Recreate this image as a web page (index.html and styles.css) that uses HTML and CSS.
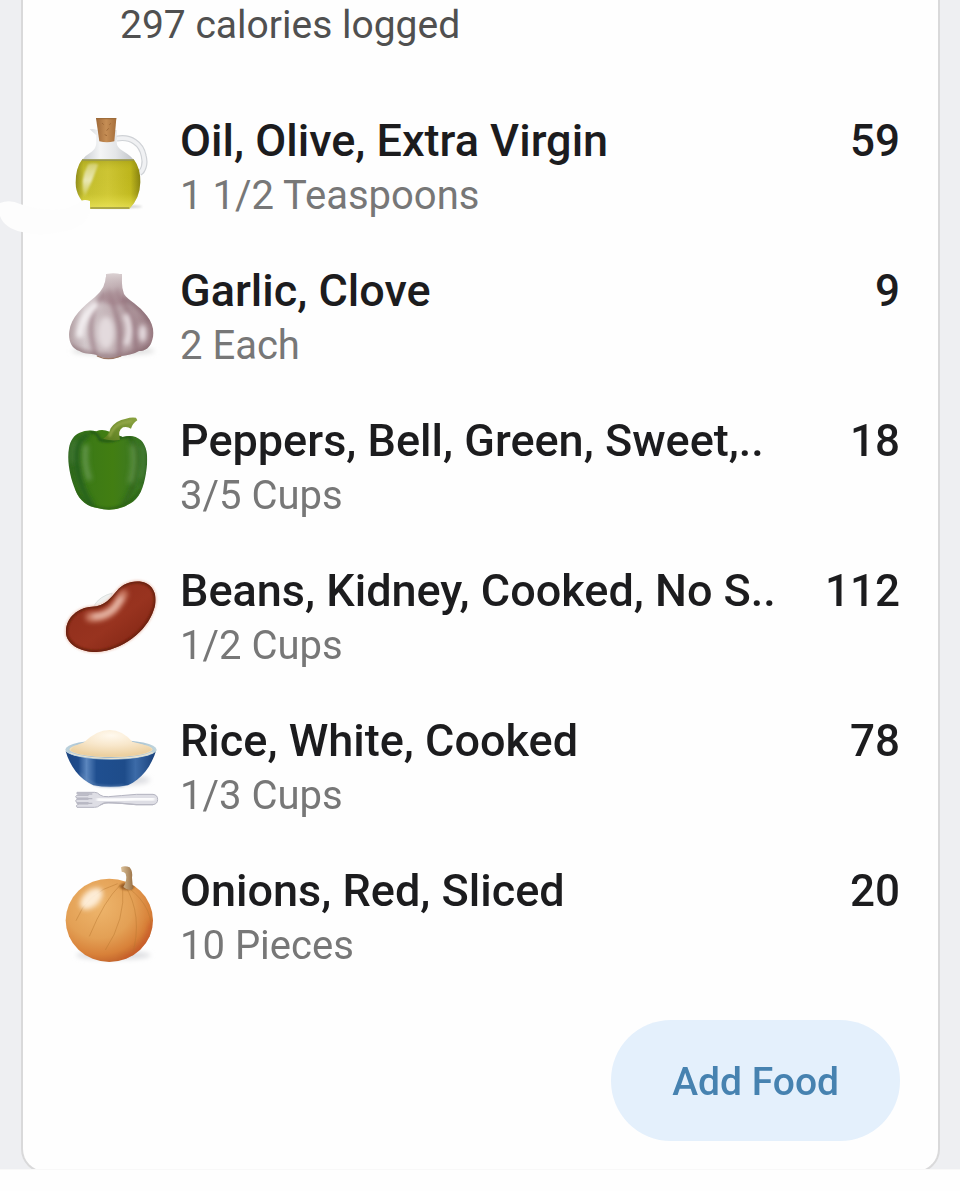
FILE: index.html
```html
<!DOCTYPE html>
<html lang="en">
<head>
<meta charset="utf-8">
<meta name="viewport" content="width=device-width, initial-scale=1">
<title>Food log</title>
<link rel="stylesheet" href="styles.css">
</head>
<body>
<main class="screen">
  <section class="card">
    <p class="summary">297 calories logged</p>
    <ul class="foods">
      <li class="food">
        <svg class="icon" viewBox="168 30 330 330" aria-hidden="true">
          <defs>
            <linearGradient id="oil" x1="0" x2="1"><stop offset="0" stop-color="#8f8b1c"/><stop offset=".12" stop-color="#c0bb2c"/><stop offset=".5" stop-color="#cdc534"/><stop offset=".85" stop-color="#bdb51c"/><stop offset="1" stop-color="#85800f"/></linearGradient>
            <linearGradient id="oilLow" x1="0" y1="0" x2="0" y2="1"><stop offset="0" stop-color="#8f8a10" stop-opacity=".4"/><stop offset=".25" stop-color="#c8c020" stop-opacity="0"/><stop offset=".7" stop-color="#efe94a" stop-opacity=".1"/><stop offset="1" stop-color="#f2ec68" stop-opacity=".7"/></linearGradient>
            <linearGradient id="cork" x1="0" x2="1"><stop offset="0" stop-color="#a06a39"/><stop offset=".5" stop-color="#c68e55"/><stop offset="1" stop-color="#a66f3c"/></linearGradient>
            <linearGradient id="glass" x1="0" x2="1"><stop offset="0" stop-color="#c8cbcf"/><stop offset=".35" stop-color="#f4f5f6"/><stop offset=".65" stop-color="#e4e6e8"/><stop offset="1" stop-color="#bfc2c7"/></linearGradient>
            <linearGradient id="shine" x1="0" y1="0" x2="0" y2="1"><stop offset="0" stop-color="#fff" stop-opacity=".3"/><stop offset=".5" stop-color="#fff" stop-opacity=".65"/><stop offset="1" stop-color="#fff" stop-opacity=".1"/></linearGradient>
            <filter id="soft" x="-30%" y="-30%" width="160%" height="160%"><feGaussianBlur stdDeviation="3"/></filter>
            <filter id="medium" x="-40%" y="-40%" width="180%" height="180%"><feGaussianBlur stdDeviation="6"/></filter>
            <filter id="softer" x="-50%" y="-50%" width="200%" height="200%"><feGaussianBlur stdDeviation="8"/></filter>
          </defs>
          <ellipse cx="350" cy="317" rx="76" ry="5" fill="#ccc" filter="url(#soft)"/>
          <path d="M350 113C393 105 424 128 431 164C438 190 429 210 419 216" fill="none" stroke="#cfd2d6" stroke-width="18"/>
          <path d="M350 113C393 105 424 128 431 164C438 190 429 210 419 216" fill="none" stroke="#f0f1f3" stroke-width="11"/>
          <path d="M289 103L269 85Q280 82 291 87H350V125Q350 139 370 151Q393 165 402 178H246Q257 162 275 152Q289 141 289 126Z" fill="url(#glass)"/>
          <path d="M246 176H402Q422 202 421 244Q420 292 388 323H271Q227 291 227 245Q227 200 246 176Z" fill="url(#oil)"/>
          <path d="M246 176H402Q422 202 421 244Q420 292 388 323H271Q227 291 227 245Q227 200 246 176Z" fill="url(#oilLow)"/>
          <path d="M246 177H402" stroke="#96944f" stroke-width="4"/>
          <path d="M271 321H388" stroke="#9b9740" stroke-width="4"/>
          <path d="M264 190Q280 183 295 190Q277 240 254 289Q237 242 264 190Z" fill="url(#shine)" filter="url(#soft)"/>
          <path d="M288 52H349L343 121Q321 127 298 121Z" fill="url(#cork)"/>
          <path d="M288 53H349" stroke="#96632f" stroke-width="3"/>
          <path d="M306 66l5 5M326 82l-6 7M314 101l7 3M333 67l-5 4" stroke="#a06a38" stroke-width="3"/>
        </svg>
        <div class="info">
          <h2 class="name">Oil, Olive, Extra Virgin</h2>
          <p class="amount">1 1/2 Teaspoons</p>
        </div>
        <span class="calories">59</span>
      </li>
      <li class="food">
        <svg class="icon" viewBox="18 0 330 330" aria-hidden="true">
          <defs>
            <linearGradient id="garlic" x1="0" x2="1"><stop offset="0" stop-color="#ae9a9e"/><stop offset=".2" stop-color="#d2c8cb"/><stop offset=".5" stop-color="#c3b2b6"/><stop offset="1" stop-color="#95757d"/></linearGradient>
            <linearGradient id="stalk" x1="0" y1="0" x2="0" y2="1"><stop offset="0" stop-color="#ddd4d5"/><stop offset="1" stop-color="#a48990" stop-opacity="0"/></linearGradient>
            <clipPath id="garlicClip"><path d="M169 39Q191 35 216 40Q213 76 222 99C235 119 267 132 291 165C308 187 315 213 307 236C301 260 285 270 267 270C251 280 234 282 216 285C196 295 154 294 137 281C119 278 103 279 88 270C64 263 54 237 58 210C63 169 98 137 135 108Q167 83 169 39Z"/></clipPath>
          </defs>
          <ellipse cx="190" cy="270" rx="125" ry="12" fill="#ddd" filter="url(#softer)"/>
          <g clip-path="url(#garlicClip)">
            <rect x="50" y="30" width="270" height="270" fill="url(#garlic)"/>
            <g filter="url(#medium)">
              <path d="M165 92C125 145 108 190 137 281M176 82C180 135 222 167 207 281M201 80C212 133 262 153 258 268" fill="none" stroke="#8f6c76" stroke-width="14" opacity=".6"/>
              <path d="M150 115Q185 145 235 125L205 90H175Z" fill="#9c7a84" opacity=".6"/>
              <path d="M222 111Q286 145 301 184" fill="none" stroke="#80606a" stroke-width="14" opacity=".6"/>
              <path d="M58 247Q180 312 309 247L300 296H60Z" fill="#78565d" opacity=".5"/>
            </g>
            <g filter="url(#softer)">
              <path d="M143 126Q89 170 89 230" fill="none" stroke="#f4f0f2" stroke-width="22"/>
              <ellipse cx="168" cy="215" rx="25" ry="48" fill="#e3dadd"/>
              <path d="M226 160Q247 205 228 253" fill="none" stroke="#efe7ea" stroke-width="16"/>
              <ellipse cx="278" cy="217" rx="12" ry="27" fill="#e6dce0"/>
            </g>
            <path d="M165 35H217V120L160 132Z" fill="url(#stalk)"/>
            <path d="M187 45V91" fill="none" stroke="#e6dede" stroke-width="12" filter="url(#soft)"/>
          </g>
          <path d="M141 285Q174 301 213 285" fill="none" stroke="#9b7663" stroke-width="4"/>
        </svg>
        <div class="info">
          <h2 class="name">Garlic, Clove</h2>
          <p class="amount">2 Each</p>
        </div>
        <span class="calories">9</span>
      </li>
      <li class="food">
        <svg class="icon" viewBox="18 15 330 330" aria-hidden="true">
          <defs>
            <clipPath id="pepperClip"><path d="M89 80Q113 70 139 76Q156 68 179 77L218 93Q251 83 273 103C292 122 294 155 290 185C285 229 275 267 249 287Q231 298 222 302Q184 318 142 306C114 302 89 286 76 252C61 215 50 169 57 126C61 103 72 87 89 80Z"/></clipPath>
            <linearGradient id="pepper" x1="0" x2="1"><stop offset="0" stop-color="#2d6420"/><stop offset=".2" stop-color="#3b7917"/><stop offset=".55" stop-color="#427e12"/><stop offset=".85" stop-color="#3c7824"/><stop offset="1" stop-color="#275d1c"/></linearGradient>
            <linearGradient id="stem" x1="0" y1="1" x2="1" y2="0"><stop offset="0" stop-color="#5a7d1e"/><stop offset="1" stop-color="#8ba341"/></linearGradient>
          </defs>
          <g clip-path="url(#pepperClip)">
            <rect x="50" y="60" width="250" height="260" fill="url(#pepper)"/>
            <g filter="url(#soft)">
              <path d="M119 78Q142 77 149 101Q177 111 202 99Q226 86 246 96" fill="none" stroke="#245a18" stroke-width="8"/>
              <path d="M76 250Q112 309 175 309Q239 303 271 252" fill="none" stroke="#2f6517" stroke-width="8"/>
            </g>
            <g filter="url(#medium)">
              <path d="M118 83Q71 103 80 170Q88 247 127 301" fill="none" stroke="#245b20" stroke-width="17" opacity=".75"/>
              <path d="M239 95Q270 129 258 190Q254 250 219 297" fill="none" stroke="#285e1d" stroke-width="15" opacity=".65"/>
            </g>
            <g filter="url(#softer)">
              <path d="M108 117Q99 171 119 222" fill="none" stroke="#6f9f5f" stroke-width="15" opacity=".8"/>
              <path d="M247 117Q258 170 241 231" fill="none" stroke="#749f5a" stroke-width="14" opacity=".7"/>
              <path d="M75 104Q61 131 67 171" fill="none" stroke="#5d8d52" stroke-width="6"/>
              <path d="M277 117Q286 161 273 217" fill="none" stroke="#5a8d4b" stroke-width="8"/>
            </g>
          </g>
          <path d="M159 98Q176 90 182 67Q197 43 228 38Q242 33 258 35L262 43Q247 53 243 68Q232 60 219 64Q202 73 210 101Q189 107 159 98Z" fill="url(#stem)"/>
          <path d="M178 92Q190 58 218 51L247 45" fill="none" stroke="#98ab4d" stroke-width="6" filter="url(#soft)"/>
        </svg>
        <div class="info">
          <h2 class="name">Peppers, Bell, Green, Sweet,..</h2>
          <p class="amount">3/5 Cups</p>
        </div>
        <span class="calories">18</span>
      </li>
      <li class="food">
        <svg class="icon" viewBox="18 -15 330 330" aria-hidden="true">
          <defs>
            <clipPath id="beanClip"><path d="M48 194C49 155 84 124 126 122C167 120 181 96 201 74C221 50 260 39 287 51C315 64 324 96 311 132C291 196 216 254 139 258C87 258 45 231 48 194Z"/></clipPath>
            <linearGradient id="bean" x1="0" y1="0" x2="1" y2="1"><stop offset="0" stop-color="#8c2c1a"/><stop offset=".55" stop-color="#98331f"/><stop offset="1" stop-color="#78200f"/></linearGradient>
          </defs>
          <path d="M132 119Q148 91 187 81L178 105L153 120Z" fill="#eff1f0" stroke="#cfd5d3" stroke-width="2"/>
          <path d="M48 194C49 155 84 124 126 122C167 120 181 96 201 74C221 50 260 39 287 51C315 64 324 96 311 132C291 196 216 254 139 258C87 258 45 231 48 194Z" fill="none" stroke="#eec9bc" stroke-width="6" filter="url(#soft)"/>
          <g clip-path="url(#beanClip)">
            <rect x="40" y="40" width="290" height="225" fill="url(#bean)"/>
            <path d="M48 194C49 155 84 124 126 122C167 120 181 96 201 74C221 50 260 39 287 51C315 64 324 96 311 132C291 196 216 254 139 258C87 258 45 231 48 194Z" fill="none" stroke="#68200f" stroke-width="11" filter="url(#soft)"/>
            <path d="M120 153C163 158 197 134 220 85" fill="none" stroke="#c87761" stroke-width="28" stroke-linecap="round" filter="url(#softer)"/>
            <path d="M132 151Q169 151 194 125L213 97" fill="none" stroke="#eec6b8" stroke-width="13" stroke-linecap="round" filter="url(#softer)"/>
          </g>
        </svg>
        <div class="info">
          <h2 class="name">Beans, Kidney, Cooked, No S..</h2>
          <p class="amount">1/2 Cups</p>
        </div>
        <span class="calories">112</span>
      </li>
      <li class="food">
        <svg class="icon" viewBox="18 -15 330 330" aria-hidden="true">
          <defs>
            <linearGradient id="bowl" x1="0" x2="1"><stop offset="0" stop-color="#1d4682"/><stop offset=".14" stop-color="#1f4c8c"/><stop offset=".23" stop-color="#5b86be"/><stop offset=".34" stop-color="#1f4f90"/><stop offset=".65" stop-color="#1e4c8a"/><stop offset=".77" stop-color="#3c6ba8"/><stop offset="1" stop-color="#173e78"/></linearGradient>
            <radialGradient id="rice" cx=".5" cy=".2" r=".75"><stop offset="0" stop-color="#fff9ee"/><stop offset=".5" stop-color="#f8e7cb"/><stop offset="1" stop-color="#ecd0a0"/></radialGradient>
            <linearGradient id="rim" x1="0" x2="1"><stop offset="0" stop-color="#bdd2dc"/><stop offset=".5" stop-color="#8cacc7"/><stop offset="1" stop-color="#c0d5dc"/></linearGradient>
          </defs>
          <ellipse cx="210" cy="192" rx="90" ry="16" fill="#dcdde1" filter="url(#softer)"/>
          <path d="M47 105Q67 126 183 130Q294 128 319 101C305 150 274 190 234 208Q181 217 130 208C87 188 59 149 47 105Z" fill="url(#bowl)"/>
          <ellipse cx="183" cy="101" rx="137" ry="30" fill="url(#rim)"/>
          <ellipse cx="183" cy="100" rx="125" ry="23" fill="#f1deb9"/>
          <path d="M61 103Q67 90 102 79Q141 41 180 42Q216 42 247 77Q300 89 306 101Q281 121 183 123Q85 122 61 103Z" fill="url(#rice)"/>
          <path d="M61 111Q98 126 183 127Q274 126 308 109" fill="none" stroke="#e9e3d0" stroke-width="4"/>
          <path d="M92 173Q121 202 145 209Q185 214 222 209" fill="none" stroke="#698bb8" stroke-width="3" filter="url(#soft)"/>
          <path d="M81 229H134Q143 229 150 237Q158 243 175 242Q211 239 259 235H309Q323 237 323 250Q323 264 309 266H258Q209 261 175 260Q159 260 150 268Q143 274 134 274H81Q75 267 88 264H115V260H80Q74 254 80 250H115V246H80Q74 242 80 238H115V234H85Q78 234 81 229Z" fill="#dedee5" stroke="#b4b4c0" stroke-width="3"/>
          <path d="M145 251Q205 254 256 248H309" fill="none" stroke="#fff" stroke-width="12" stroke-linecap="round" filter="url(#soft)"/>
          <path d="M82 234H127M80 248H127M80 262H127M151 267Q162 260 175 260Q215 262 259 266H309" fill="none" stroke="#b8b8c3" stroke-width="4"/>
        </svg>
        <div class="info">
          <h2 class="name">Rice, White, Cooked</h2>
          <p class="amount">1/3 Cups</p>
        </div>
        <span class="calories">78</span>
      </li>
      <li class="food">
        <svg class="icon" viewBox="18 15 330 330" aria-hidden="true">
          <defs>
            <radialGradient id="onion" cx=".38" cy=".32" r=".72"><stop offset="0" stop-color="#eeb66d"/><stop offset=".55" stop-color="#e3a055"/><stop offset=".82" stop-color="#d88139"/><stop offset="1" stop-color="#c0602a"/></radialGradient>
            <linearGradient id="sprout" x1="0" x2="1"><stop offset="0" stop-color="#dcc29a"/><stop offset="1" stop-color="#9a7145"/></linearGradient>
            <clipPath id="onionClip"><ellipse cx="178" cy="193" rx="131" ry="125"/></clipPath>
          </defs>
          <ellipse cx="190" cy="298" rx="112" ry="12" fill="#d9dade" filter="url(#softer)"/>
          <ellipse cx="178" cy="193" rx="131" ry="125" fill="url(#onion)"/>
          <g clip-path="url(#onionClip)">
            <path d="M224 87Q281 177 246 302M230 91Q322 160 298 247M218 90Q227 191 166 282M211 87Q163 132 118 241M203 83Q111 110 78 194" fill="none" stroke="#b97830" stroke-width="3" opacity=".45"/>
            <ellipse cx="124" cy="128" rx="40" ry="24" fill="#fff3e2" opacity=".9" transform="rotate(-42 124 128)" filter="url(#softer)"/>
            <path d="M219 312Q294 283 306 199" fill="none" stroke="#cf5528" stroke-width="18" opacity=".5" filter="url(#softer)"/>
            <ellipse cx="231" cy="91" rx="22" ry="11" fill="#985c25" filter="url(#soft)"/>
          </g>
          <path d="M213 34Q224 28 239 34Q249 47 246 65L249 98Q237 108 220 93Q233 71 227 53Q223 47 215 47Z" fill="url(#sprout)"/>
        </svg>
        <div class="info">
          <h2 class="name">Onions, Red, Sliced</h2>
          <p class="amount">10 Pieces</p>
        </div>
        <span class="calories">20</span>
      </li>
    </ul>
    <button class="add" type="button">Add Food</button>
  </section>
  <svg class="smudge" viewBox="0 0 92 40" aria-hidden="true">
    <path d="M0 5Q10 1 20 6Q44 14 64 11L78 6Q82 0 90 3V13Q86 26 73 31Q43 40 22 34Q4 30 0 18Z" fill="#fdfdfd"/>
  </svg>
</main>
</body>
</html>
```

FILE: styles.css
```css
* {
  box-sizing: border-box;
}

body {
  margin: 0;
  background: #fefefe;
  color: #1c1c1e;
  font-family: Roboto, sans-serif;
}

h2,
p,
ul {
  margin: 0;
  padding: 0;
}

.screen {
  position: relative;
  overflow: hidden;
  padding: 0 20px 0 21px;
  background: #eeeff2;
  border-bottom: 1px solid #f8f8f8;
}

.card {
  display: flex;
  flex-direction: column;
  margin-bottom: -4px;
  padding: 0 38px 30px 33px;
  background: #fefefe;
  border: 2px solid #d9d9da;
  border-top: 0;
  border-radius: 0 0 24px 24px;
}

.summary {
  padding-left: 64px;
  color: #505050;
  font-size: 39px;
  line-height: 50px;
}

.foods {
  display: flex;
  flex-direction: column;
  gap: 40px;
  margin-top: 61px;
  list-style: none;
}

.food {
  display: flex;
  align-items: flex-start;
}

.icon {
  flex: none;
  width: 110px;
  height: 110px;
  margin-right: 14px;
}

.info {
  flex: 1;
  min-width: 0;
}

.name {
  overflow: hidden;
  font-size: 45px;
  font-weight: 500;
  line-height: 60px;
  white-space: nowrap;
}

.amount {
  color: #777;
  font-size: 40px;
  line-height: 50px;
}

.calories {
  flex: none;
  font-size: 44px;
  font-weight: 500;
  line-height: 60px;
}

.add {
  align-self: flex-end;
  margin-top: 49px;
  padding: 38px 61px 34px;
  border: 0;
  border-radius: 60px;
  background: #e4f0fc;
  color: #4682b0;
  font: 500 39px/49px Roboto, sans-serif;
}

.smudge {
  position: absolute;
  top: 198px;
  left: 0;
  width: 92px;
  height: 40px;
}
```
